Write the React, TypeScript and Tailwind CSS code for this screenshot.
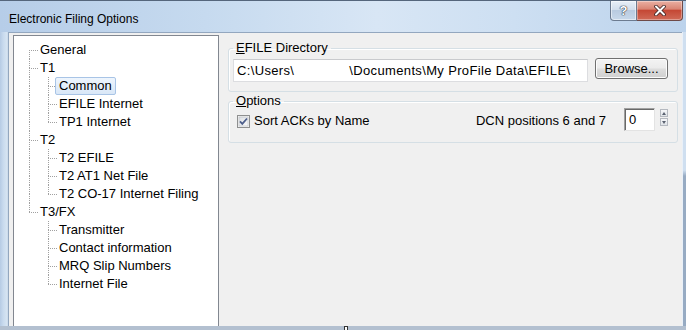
import React from "react";

type Item = {
  label: string;
  level: 1 | 2;
  first?: boolean;
  last?: boolean;
  parentLast?: boolean;
  selected?: boolean;
};

const items: Item[] = [
  { label: "General", level: 1, first: true },
  { label: "T1", level: 1 },
  { label: "Common", level: 2, selected: true },
  { label: "EFILE Internet", level: 2 },
  { label: "TP1 Internet", level: 2, last: true },
  { label: "T2", level: 1 },
  { label: "T2 EFILE", level: 2 },
  { label: "T2 AT1 Net File", level: 2 },
  { label: "T2 CO-17 Internet Filing", level: 2, last: true },
  { label: "T3/FX", level: 1, last: true },
  { label: "Transmitter", level: 2, parentLast: true },
  { label: "Contact information", level: 2, parentLast: true },
  { label: "MRQ Slip Numbers", level: 2, parentLast: true },
  { label: "Internet File", level: 2, parentLast: true, last: true },
];

function Connector({
  top,
  bottom,
  horiz,
  wide,
}: {
  top: boolean;
  bottom: boolean;
  horiz: boolean;
  wide?: boolean;
}) {
  return (
    <div className={`flex flex-col h-[18px] shrink-0 ${wide ? "w-[19px]" : "w-[9px]"}`}>
      <div
        className={`h-[9px] border-dotted border-[#a0a0a0] ${top ? "border-l" : ""}`}
      />
      <div
        className={`h-[9px] border-dotted border-[#a0a0a0] ${bottom ? "border-l" : ""} ${
          horiz ? "border-t" : ""
        }`}
      />
    </div>
  );
}

function TreeRow({ item }: { item: Item }) {
  const label = item.selected ? (
    <span className="relative -ml-[2px] px-[3px] h-[18px] leading-[16px] border border-[#a8c4e6] rounded-[2px] bg-[linear-gradient(180deg,#eef5fd,#d9e7f7)] whitespace-nowrap">
      {item.label}
    </span>
  ) : (
    <span className="ml-[2px] h-[18px] leading-[18px] whitespace-nowrap">{item.label}</span>
  );
  return (
    <div className="flex items-start h-[18px] pl-[15px] text-[13px]">
      {item.level === 1 ? (
        <Connector top={!item.first} bottom={!item.last} horiz />
      ) : (
        <>
          <Connector top={!item.parentLast} bottom={!item.parentLast} horiz={false} wide />
          <Connector top bottom={!item.last} horiz />
        </>
      )}
      {label}
    </div>
  );
}

function Checkbox() {
  return (
    <svg width="13" height="13" viewBox="0 0 13 13" className="shrink-0">
      <defs>
        <linearGradient id="cbg" x1="0" y1="0" x2="1" y2="1">
          <stop offset="0" stopColor="#dcdfe3" />
          <stop offset="1" stopColor="#fbfbfb" />
        </linearGradient>
      </defs>
      <rect x="0.5" y="0.5" width="12" height="12" fill="#f4f4f4" stroke="#8e8f8f" />
      <rect x="2" y="2" width="9" height="9" fill="url(#cbg)" stroke="#b9bcc1" strokeWidth="0.6" />
      <path d="M3 6.3 L5.3 8.8 L10 3.5" fill="none" stroke="#4e5f8c" strokeWidth="1.8" />
    </svg>
  );
}

export default function App() {
  return (
    <div className="w-[686px] h-[330px] overflow-hidden flex flex-col bg-[#c4d8ee] font-['Liberation_Sans',Arial,sans-serif] text-black">
      {/* Title bar */}
      <div className="h-[32px] shrink-0 flex items-start border-t border-[#55667c] bg-[linear-gradient(90deg,#b6cde8_0%,#c6daef_30%,#d8e6f5_55%,#cddff2_75%,#bcd3ec_100%)]">
        <div className="pl-[9px] pt-[11px] text-[12px] leading-[14px] text-black">
          Electronic Filing Options
        </div>
        <div className="ml-auto mr-[3px] flex">
          <div className="w-[27px] h-[20px] flex items-center justify-center border border-t-0 border-[#6c7b90] rounded-bl-[4px] bg-[linear-gradient(180deg,#e8eff7_0%,#d2deec_45%,#b9cbe0_50%,#c8d8ea_100%)] shadow-[inset_0_0_0_1px_rgba(255,255,255,0.5)]">
            <span className="text-[13px] font-bold leading-none text-white [text-shadow:0_0_1px_#2b3440,0_0_1px_#2b3440,0_0_1px_#2b3440]">
              ?
            </span>
          </div>
          <div className="w-[46px] h-[20px] flex items-center justify-center border border-t-0 border-l-0 border-[#6e4a48] rounded-br-[4px] bg-[linear-gradient(180deg,#eab0a3_0%,#d98574_42%,#c54835_50%,#d06a57_100%)] shadow-[inset_0_0_0_1px_rgba(255,255,255,0.35)]">
            <svg width="12" height="11" viewBox="0 0 12 11">
              <path d="M2 1.5 L10 9.5 M10 1.5 L2 9.5" stroke="#3a2020" strokeWidth="3.6" strokeLinecap="round" />
              <path d="M2 1.5 L10 9.5 M10 1.5 L2 9.5" stroke="#ffffff" strokeWidth="2" strokeLinecap="round" />
            </svg>
          </div>
        </div>
      </div>

      {/* Body */}
      <div className="flex h-[294px] shrink-0">
        <div className="w-[8px] shrink-0 bg-[linear-gradient(90deg,#b6cbe4_0%,#c8daee_40%,#d6e4f2_85%,#c6d6e8_100%)]" />
        <div className="flex-1 min-w-0 flex bg-[#f0f0f0] border-l border-t border-[#93a7bf] pl-[4px] pt-[2px] pr-[4px] gap-[9px]">
          {/* Tree */}
          <div className="w-[206px] shrink-0 bg-white border border-b-0 border-[#828790] pt-[5px]">
            {items.map((it) => (
              <TreeRow key={it.label} item={it} />
            ))}
          </div>

          {/* Right */}
          <div className="flex-1 min-w-0 flex flex-col mt-[6px] text-[13px]">
            <fieldset className="m-0 min-w-0 border border-[#d5dfe5] rounded-[3px] pl-[4px] pr-[9px] pb-[9px] shadow-[inset_1px_1px_0_#ffffff]">
              <legend className="px-[3px] leading-[14px]">
                <span className="underline underline-offset-[1px]">E</span>FILE Directory
              </legend>
              <div className="flex items-start gap-[7px] pt-[3px]">
                <div className="flex-1 min-w-0 h-[23px] mt-[1px] bg-white border border-[#dcdde0] border-t-[#c9cacd] pl-[3px] flex items-center whitespace-nowrap overflow-hidden tracking-[0.35px]">
                  <span>C:\Users\</span>
                  <span className="inline-block w-[55px] shrink-0" />
                  <span>\Documents\My ProFile Data\EFILE\</span>
                </div>
                <div className="w-[73px] h-[21px] shrink-0 flex items-center justify-center border border-[#707070] rounded-[3px] bg-[linear-gradient(180deg,#f3f3f3_0%,#ebebeb_48%,#dddddd_52%,#cfcfcf_100%)] shadow-[inset_0_0_0_1px_#fcfcfc]">
                  Browse...
                </div>
              </div>
            </fieldset>

            <fieldset className="mt-[2px] m-0 min-w-0 border border-[#d5dfe5] rounded-[3px] pl-[4px] pr-[9px] pb-[11px] shadow-[inset_1px_1px_0_#ffffff]">
              <legend className="px-[3px] leading-[14px]">
                <span className="underline underline-offset-[1px]">O</span>ptions
              </legend>
              <div className="flex items-start h-[23px]">
                <div className="ml-[4px] mt-[7px]">
                  <Checkbox />
                </div>
                <span className="ml-[4px] mt-[5px] leading-[16px] whitespace-nowrap">Sort ACKs by Name</span>
                <span className="ml-auto mt-[5px] mr-[18px] leading-[16px] whitespace-nowrap">
                  DCN positions 6 and 7
                </span>
                <div className="w-[31px] h-[23px] shrink-0 bg-white border border-t-[#a0a0a0] border-l-[#a0a0a0] border-r-[#e3e3e3] border-b-[#e3e3e3] shadow-[inset_1px_1px_0_#696969] pl-[4px] flex items-center">
                  0
                </div>
                <div className="ml-[5px] mt-[1px] w-[8px] flex flex-col gap-[1px]">
                  <div className="h-[8px] border border-[#b5b9c0] bg-[linear-gradient(180deg,#f6f7f9,#dfe3e8)] flex items-center justify-center">
                    <svg width="4" height="3" viewBox="0 0 4 3">
                      <path d="M0 3 L2 0 L4 3 Z" fill="#5a6170" />
                    </svg>
                  </div>
                  <div className="h-[8px] border border-[#b5b9c0] bg-[linear-gradient(180deg,#f6f7f9,#dfe3e8)] flex items-center justify-center">
                    <svg width="4" height="3" viewBox="0 0 4 3">
                      <path d="M0 0 L4 0 L2 3 Z" fill="#5a6170" />
                    </svg>
                  </div>
                </div>
              </div>
            </fieldset>
          </div>
        </div>
        <div className="w-[4px] shrink-0 border-l border-[#e9f0f8] bg-[linear-gradient(180deg,#cfdff0_0%,#cfdff0_47%,#97abc3_49%,#97abc3_100%)]" />
      </div>

      {/* Bottom strip */}
      <div className="h-[4px] shrink-0 bg-[#b3c0d0] flex">
        <div className="ml-[344px] w-[4px] h-[4px] bg-white border border-b-0 border-[#333333]" />
      </div>
    </div>
  );
}
